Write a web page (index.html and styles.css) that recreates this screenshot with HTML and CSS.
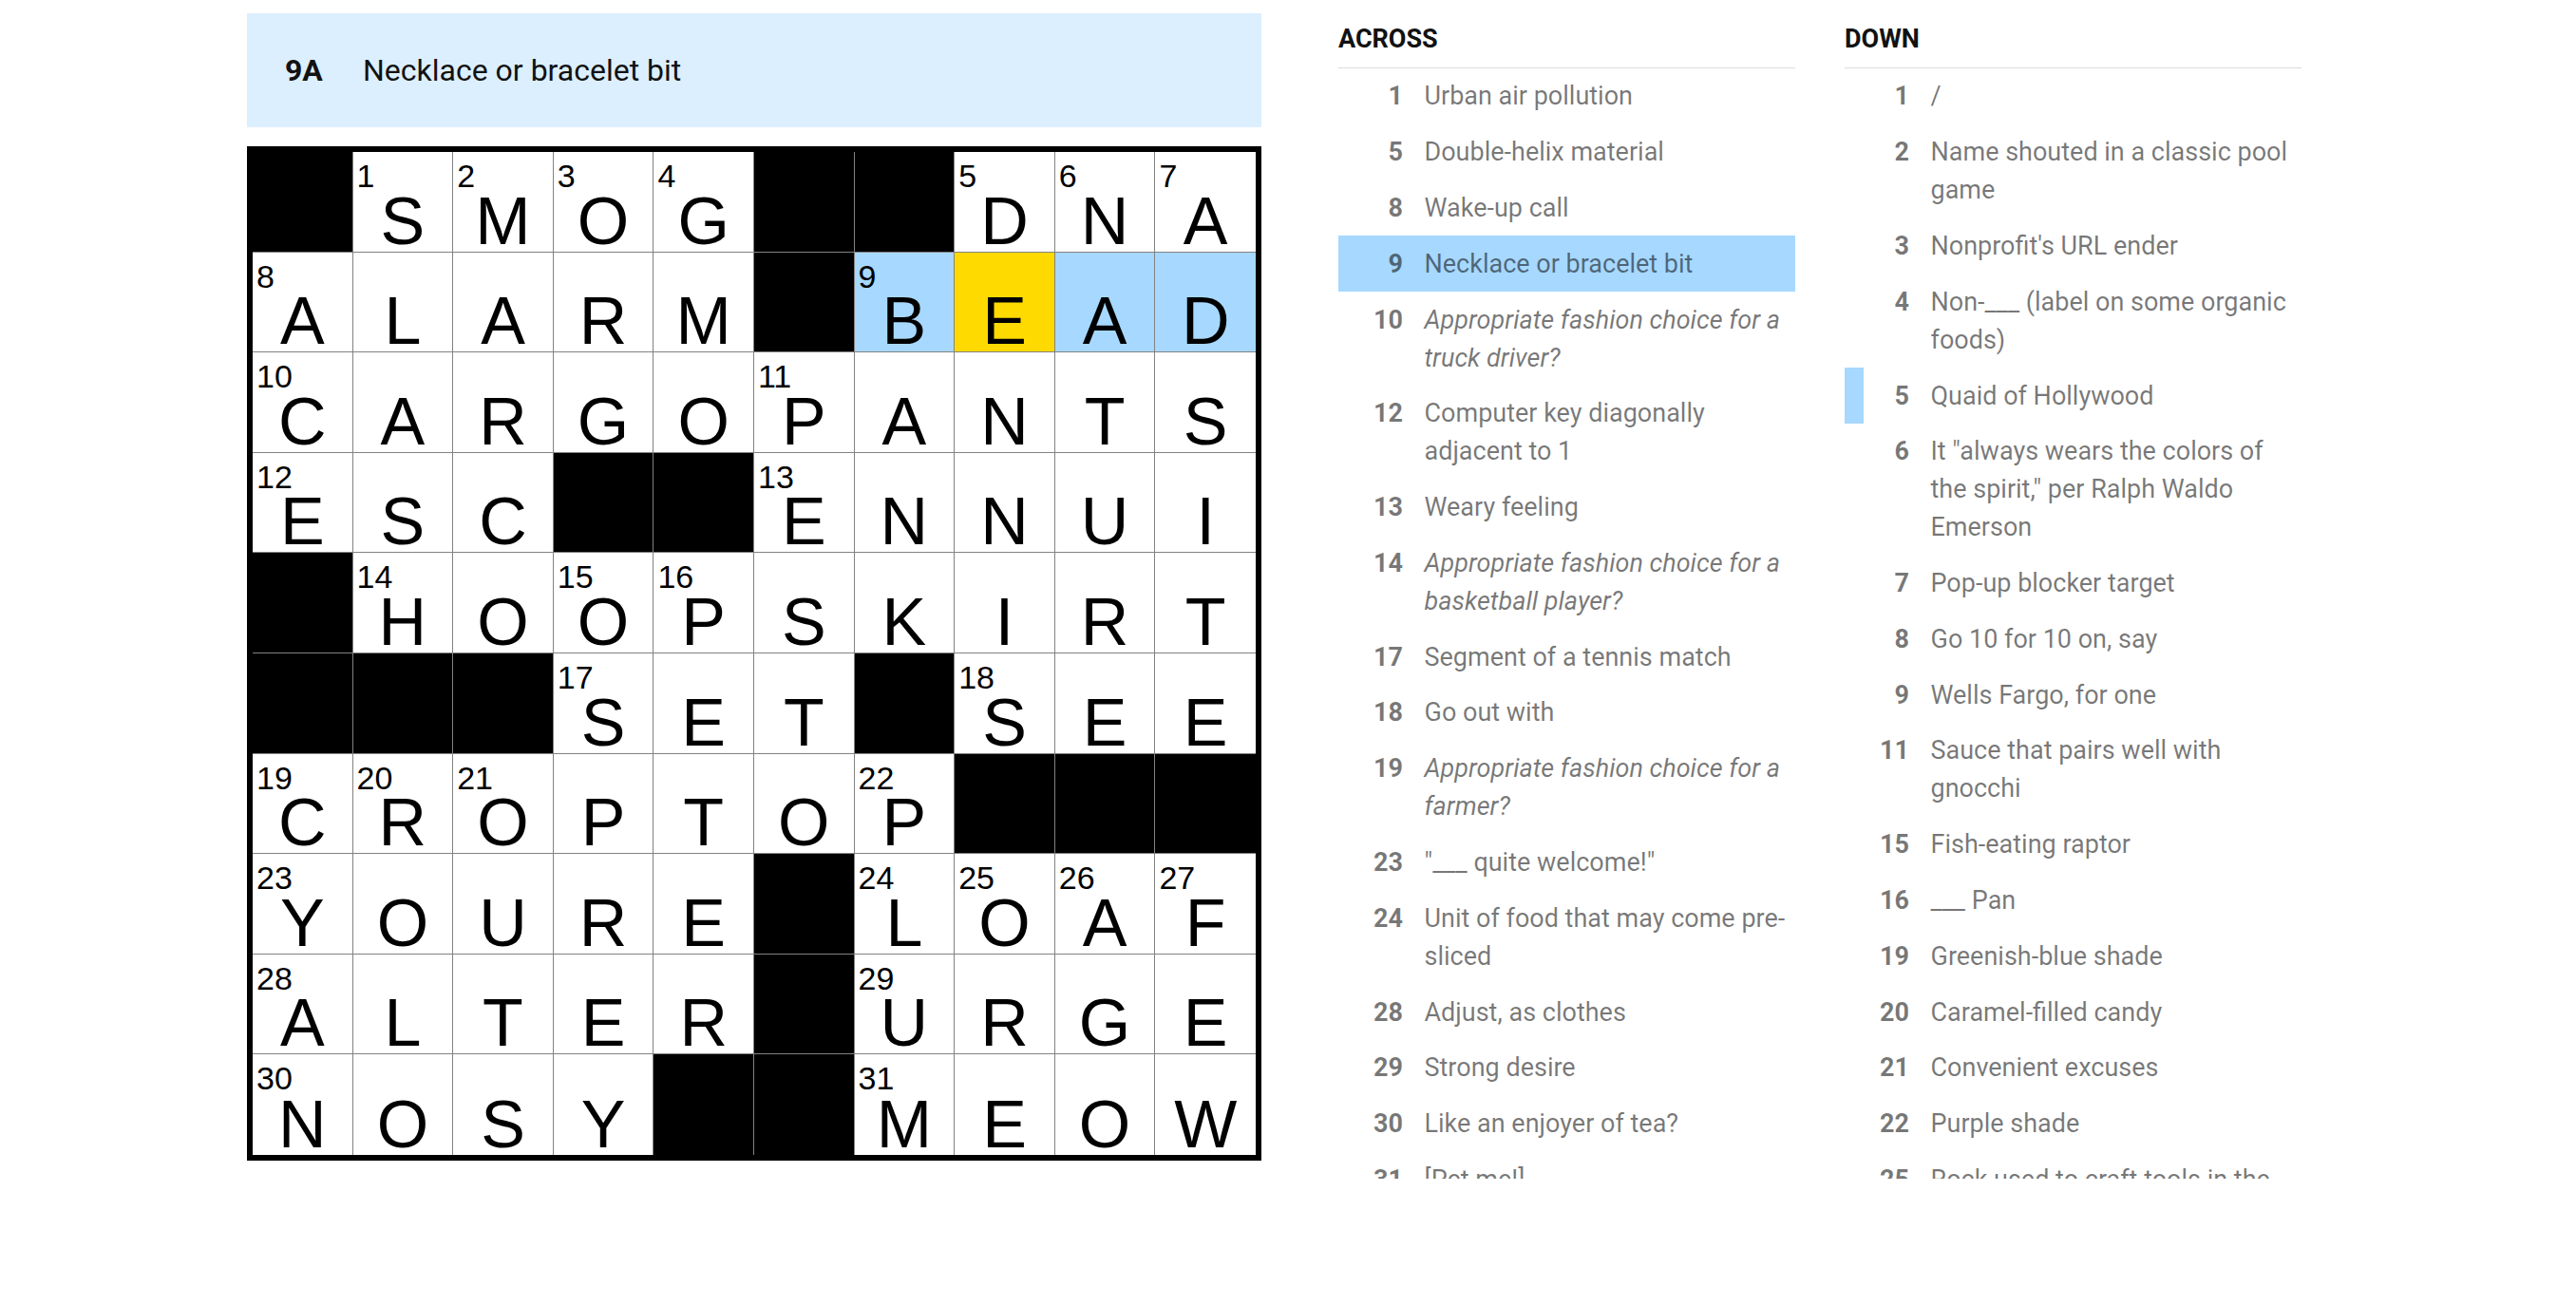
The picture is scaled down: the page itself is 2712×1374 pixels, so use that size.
FILE: index.html
```html
<!DOCTYPE html>
<html lang="en">
  <head>
    <meta charset="UTF-8" />
    <meta name="viewport" content="width=device-width, initial-scale=1.0" />
    <title>Mini Crossword</title>
    <link rel="stylesheet" href="styles.css">
  </head>
  <body>
    <div class="app">
      <section class="board">
        <div class="clue-bar">
          <span class="clue-bar-num">9A</span>
          <span class="clue-bar-text">Necklace or bracelet bit</span>
        </div>
        <div class="grid" id="grid"></div>
      </section>

      <section class="clue-lists">
        <div class="clue-list">
          <h3 class="clue-list-title">Across</h3>
          <ol class="clue-list-items">
            <li class="clue"><span class="clue-num">1</span><span class="clue-text">Urban air pollution</span></li>
            <li class="clue"><span class="clue-num">5</span><span class="clue-text">Double-helix material</span></li>
            <li class="clue"><span class="clue-num">8</span><span class="clue-text">Wake-up call</span></li>
            <li class="clue is-active"><span class="clue-num">9</span><span class="clue-text">Necklace or bracelet bit</span></li>
            <li class="clue"><span class="clue-num">10</span><span class="clue-text is-themed">Appropriate fashion choice for a truck driver?</span></li>
            <li class="clue"><span class="clue-num">12</span><span class="clue-text">Computer key diagonally adjacent to 1</span></li>
            <li class="clue"><span class="clue-num">13</span><span class="clue-text">Weary feeling</span></li>
            <li class="clue"><span class="clue-num">14</span><span class="clue-text is-themed">Appropriate fashion choice for a basketball player?</span></li>
            <li class="clue"><span class="clue-num">17</span><span class="clue-text">Segment of a tennis match</span></li>
            <li class="clue"><span class="clue-num">18</span><span class="clue-text">Go out with</span></li>
            <li class="clue"><span class="clue-num">19</span><span class="clue-text is-themed">Appropriate fashion choice for a farmer?</span></li>
            <li class="clue"><span class="clue-num">23</span><span class="clue-text">"___ quite welcome!"</span></li>
            <li class="clue"><span class="clue-num">24</span><span class="clue-text">Unit of food that may come pre-sliced</span></li>
            <li class="clue"><span class="clue-num">28</span><span class="clue-text">Adjust, as clothes</span></li>
            <li class="clue"><span class="clue-num">29</span><span class="clue-text">Strong desire</span></li>
            <li class="clue"><span class="clue-num">30</span><span class="clue-text">Like an enjoyer of tea?</span></li>
            <li class="clue"><span class="clue-num">31</span><span class="clue-text">[Pet me!]</span></li>
          </ol>
        </div>

        <div class="clue-list">
          <h3 class="clue-list-title">Down</h3>
          <ol class="clue-list-items">
            <li class="clue"><span class="clue-num">1</span><span class="clue-text">/</span></li>
            <li class="clue"><span class="clue-num">2</span><span class="clue-text">Name shouted in a classic pool game</span></li>
            <li class="clue"><span class="clue-num">3</span><span class="clue-text">Nonprofit's URL ender</span></li>
            <li class="clue"><span class="clue-num">4</span><span class="clue-text">Non-___ (label on some organic foods)</span></li>
            <li class="clue is-cross"><span class="clue-num">5</span><span class="clue-text">Quaid of Hollywood</span></li>
            <li class="clue"><span class="clue-num">6</span><span class="clue-text">It "always wears the colors of the spirit," per Ralph Waldo Emerson</span></li>
            <li class="clue"><span class="clue-num">7</span><span class="clue-text">Pop-up blocker target</span></li>
            <li class="clue"><span class="clue-num">8</span><span class="clue-text">Go 10 for 10 on, say</span></li>
            <li class="clue"><span class="clue-num">9</span><span class="clue-text">Wells Fargo, for one</span></li>
            <li class="clue"><span class="clue-num">11</span><span class="clue-text">Sauce that pairs well with gnocchi</span></li>
            <li class="clue"><span class="clue-num">15</span><span class="clue-text">Fish-eating raptor</span></li>
            <li class="clue"><span class="clue-num">16</span><span class="clue-text">___ Pan</span></li>
            <li class="clue"><span class="clue-num">19</span><span class="clue-text">Greenish-blue shade</span></li>
            <li class="clue"><span class="clue-num">20</span><span class="clue-text">Caramel-filled candy</span></li>
            <li class="clue"><span class="clue-num">21</span><span class="clue-text">Convenient excuses</span></li>
            <li class="clue"><span class="clue-num">22</span><span class="clue-text">Purple shade</span></li>
            <li class="clue"><span class="clue-num">25</span><span class="clue-text">Rock used to craft tools in the Stone Age</span></li>
          </ol>
        </div>
      </section>
    </div>

    <script>
      // Solution rows, "#" marks a black square
      const rows = [
        "#SMOG##DNA",
        "ALARM#BEAD",
        "CARGOPANTS",
        "ESC##ENNUI",
        "#HOOPSKIRT",
        "###SET#SEE",
        "CROPTOP###",
        "YOURE#LOAF",
        "ALTER#URGE",
        "NOSY##MEOW",
      ];

      // Current word: 9-Across, cursor on the second letter
      const word = { row: 1, from: 6, to: 9, cursor: 7 };

      const grid = document.getElementById("grid");
      const isOpen = (r, c) =>
        r >= 0 && r < 10 && c >= 0 && c < 10 && rows[r][c] !== "#";

      let num = 1;
      for (let r = 0; r < 10; r++) {
        for (let c = 0; c < 10; c++) {
          const cell = document.createElement("div");
          cell.className = "cell";

          if (!isOpen(r, c)) {
            cell.classList.add("is-block");
            grid.appendChild(cell);
            continue;
          }

          const startsAcross = !isOpen(r, c - 1) && isOpen(r, c + 1);
          const startsDown = !isOpen(r - 1, c) && isOpen(r + 1, c);
          if (startsAcross || startsDown) {
            const label = document.createElement("span");
            label.className = "cell-num";
            label.textContent = num++;
            cell.appendChild(label);
          }

          if (r === word.row && c >= word.from && c <= word.to) {
            cell.classList.add(c === word.cursor ? "is-selected" : "is-word");
          }

          const letter = document.createElement("span");
          letter.className = "cell-letter";
          letter.textContent = rows[r][c];
          cell.appendChild(letter);

          grid.appendChild(cell);
        }
      }
    </script>
  </body>
</html>
```

FILE: styles.css
```css
body {
  margin: 0;
  font-family: Roboto, "Liberation Sans", sans-serif;
  color: #121212;
  background: #fff;
}
.app {
  display: flex;
  align-items: flex-start;
  gap: 81px;
  padding: 14px 0 0 260px;
}
.board {
  flex: none;
  width: 1068px;
}
.clue-bar {
  display: flex;
  align-items: center;
  height: 120px;
  margin-bottom: 20px;
  padding-left: 40px;
  background: #dcefff;
  font-size: 32px;
}
.clue-bar-num {
  flex: none;
  width: 82px;
  font-weight: 700;
}
.grid {
  display: grid;
  grid-template-columns: repeat(10, 1fr);
  grid-template-rows: repeat(10, 1fr);
  width: 1068px;
  height: 1068px;
  box-sizing: border-box;
  border: 6px solid #000;
  font-family: "Liberation Sans", Arial, sans-serif;
  color: #000;
}
.cell {
  position: relative;
  display: flex;
  justify-content: center;
  align-items: flex-end;
  box-sizing: border-box;
  border-right: 1px solid #828282;
  border-bottom: 1px solid #828282;
  background: #fff;
}
.cell:nth-child(10n) {
  border-right: none;
}
.cell:nth-last-child(-n + 10) {
  border-bottom: none;
}
.cell.is-block {
  background: #000;
}
.cell.is-word {
  background: #a7d8ff;
}
.cell.is-selected {
  background: #ffda00;
}
.cell-num {
  position: absolute;
  top: 8px;
  left: 4px;
  font-size: 34px;
  line-height: 1;
}
.cell-letter {
  font-size: 70px;
  line-height: 63px;
}
.clue-lists {
  display: flex;
  gap: 52px;
  padding-top: 12px;
}
.clue-list {
  width: 481px;
}
.clue-list-title {
  margin: 0;
  padding-bottom: 15px;
  border-bottom: 1px solid #dcdcdc;
  font-size: 27px;
  line-height: 30px;
  font-weight: 700;
  text-transform: uppercase;
}
.clue-list-items {
  list-style: none;
  margin: 0;
  padding: 0;
  height: 1169px;
  overflow: hidden;
}
.clue {
  display: flex;
  padding: 9.4px 6px 9.4px 0;
  font-size: 27px;
  line-height: 40px;
  color: rgba(0, 0, 0, 0.53);
}
.clue-num {
  flex: none;
  width: 68px;
  margin-right: 22.5px;
  text-align: right;
  font-weight: 700;
}
.clue-text {
  flex: 1;
}
.clue-text.is-themed {
  font-style: italic;
}
.clue.is-active {
  background: #a7d8ff;
}
.clue.is-cross {
  background: linear-gradient(90deg, #a7d8ff 20px, transparent 20px);
}
```
